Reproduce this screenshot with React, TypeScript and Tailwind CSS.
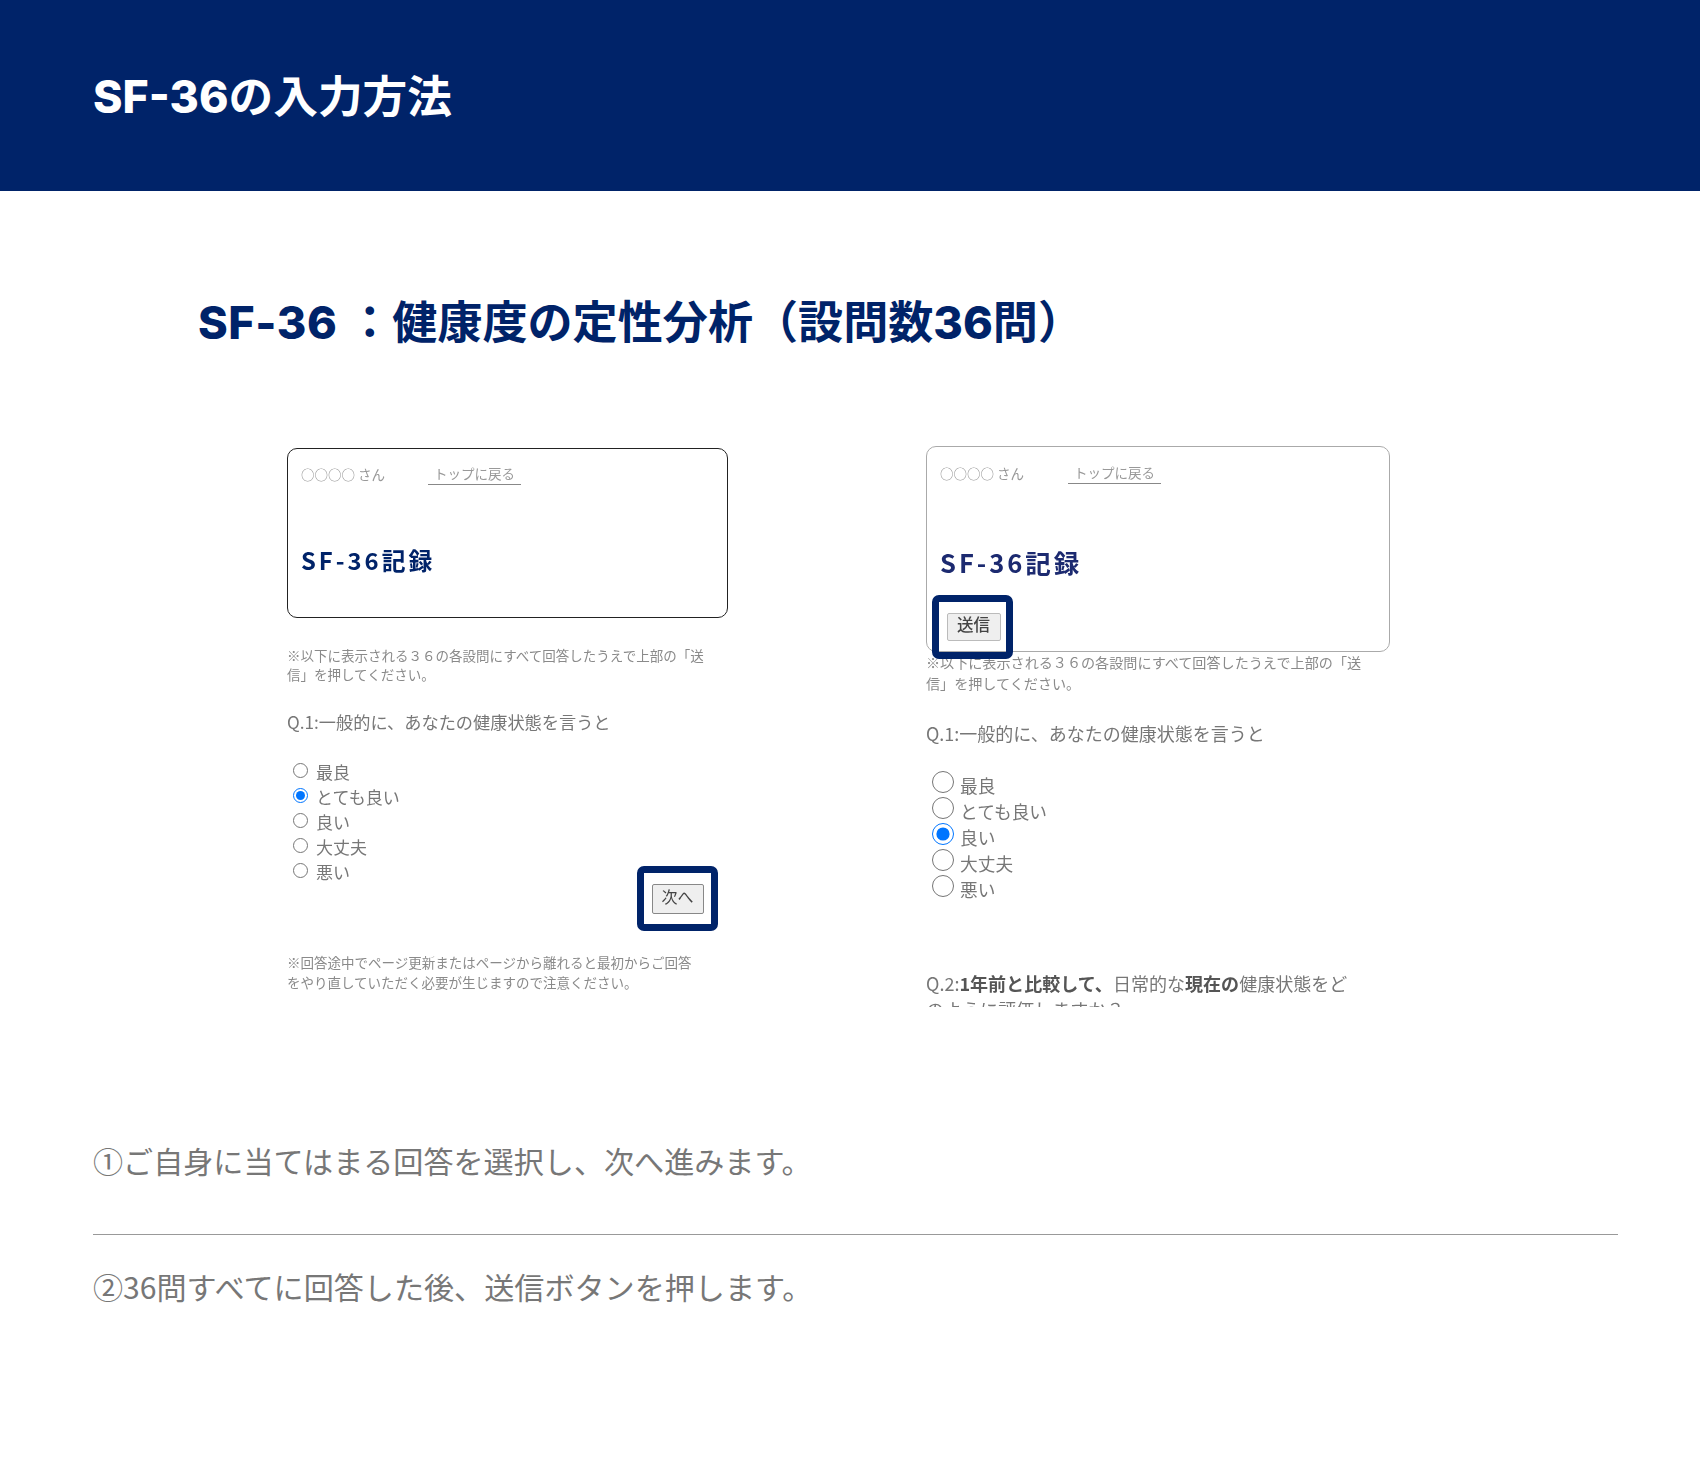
import React from "react";

const jp = "font-['Noto_Sans_CJK_JP','Noto_Sans',sans-serif]";
const latin = "font-['Inter','Noto_Sans_CJK_JP',sans-serif] font-extrabold";

function Radio({ label, checked, big }: { label: string; checked?: boolean; big?: boolean }) {
  return (
    <div className={big ? "flex h-[26px] items-center" : "flex h-[25px] items-center"}>
      <input
        type="radio"
        readOnly
        checked={!!checked}
        className={
          big
            ? "m-0 ml-[6px] h-[22px] w-[22px] shrink-0 accent-[#0075ff]"
            : "m-0 ml-[6px] h-[15px] w-[15px] shrink-0 accent-[#0075ff]"
        }
      />
      <span
        className={
          big
            ? "ml-[6px] mt-[6px] text-[17.7px] leading-[26px] text-[#777]"
            : "ml-[8px] mt-[2px] text-[17px] leading-[25px] text-[#777]"
        }
      >
        {label}
      </span>
    </div>
  );
}

const options = ["最良", "とても良い", "良い", "大丈夫", "悪い"];

function LeftShot() {
  return (
    <div className="relative h-[557px] w-[445px] overflow-hidden blur-[0.4px]">
      <div className="h-[170px] w-[441px] rounded-[10px] border-[1.5px] border-[#222] px-[13px] pt-[13px]">
        <div className="flex h-[24px] items-center text-[13.5px] text-[#999]">
          <span className="w-[127px]">○○○○ さん</span>
          <span className="w-[93px] border-b border-[#888] pb-[1px] text-center leading-[20px]">トップに戻る</span>
        </div>
        <div className="mt-[59px] text-[23.8px] font-bold leading-[30px] tracking-[3px] text-[#002369]">SF-36記録</div>
      </div>
      <p className="mt-[28px] whitespace-nowrap text-[13.5px] leading-[19px] text-[#8a8a8a]">
        ※以下に表示される３６の各設問にすべて回答したうえで上部の「送
        <br />
        信」を押してください。
      </p>
      <p className="mt-[26px] text-[17.2px] leading-[24px] text-[#777]">Q.1:一般的に、あなたの健康状態を言うと</p>
      <div className="mt-[24px]">
        {options.map((o, i) => (
          <Radio key={o} label={o} checked={i === 1} />
        ))}
      </div>
      <p className="mt-[70px] whitespace-nowrap text-[13.5px] leading-[19.5px] text-[#8a8a8a]">
        ※回答途中でページ更新またはページから離れると最初からご回答
        <br />
        をやり直していただく必要が生じますので注意ください。
      </p>
      <div className="absolute left-[350px] top-[418px] flex h-[65px] w-[81px] items-center justify-center rounded-[7px] border-[7px] border-[#002369]">
        <span className="flex h-[30px] w-[52px] items-center justify-center rounded-[2px] border border-[#888] bg-[#efefef] pb-[5px] text-[16px] text-[#444]">
          次へ
        </span>
      </div>
    </div>
  );
}

function RightShot() {
  return (
    <div className="relative h-[561px] w-[470px] overflow-hidden blur-[0.7px]">
      <div className="h-[206px] w-[464px] rounded-[10px] border-[1.5px] border-[#aaa] px-[13px] pt-[14px]">
        <div className="flex h-[24px] items-center text-[13.5px] text-[#999]">
          <span className="w-[128px]">○○○○ さん</span>
          <span className="w-[93px] border-b border-[#888] pb-[1px] text-center leading-[20px]">トップに戻る</span>
        </div>
        <div className="mt-[61px] text-[25.5px] font-bold leading-[32px] tracking-[3px] text-[#1c2a70]">SF-36記録</div>
      </div>
      <p className="mt-0 whitespace-nowrap text-[14.1px] leading-[20.5px] text-[#8a8a8a]">
        ※以下に表示される３６の各設問にすべて回答したうえで上部の「送
        <br />
        信」を押してください。
      </p>
      <p className="mt-[27px] text-[18px] leading-[26px] text-[#777]">Q.1:一般的に、あなたの健康状態を言うと</p>
      <div className="mt-[23px]">
        {options.map((o, i) => (
          <Radio key={o} label={o} checked={i === 2} big />
        ))}
      </div>
      <p className="mt-[71px] whitespace-nowrap text-[18.05px] leading-[26px] text-[#777]">
        Q.2:<b className="text-[#555]">1年前と比較して、</b>日常的な<b className="text-[#555]">現在の</b>健康状態をど
        <br />
        のように評価しますか？
      </p>
      <div className="absolute left-[6px] top-[149px] flex h-[64px] w-[81px] items-center justify-center rounded-[7px] border-[7px] border-[#002369]">
        <span className="ml-[2px] flex h-[28px] w-[54px] items-center justify-center rounded-[2px] border border-[#bbb] bg-[#efefef] pb-[6px] text-[16.5px] font-medium text-[#444]">
          送信
        </span>
      </div>
    </div>
  );
}

export default function App() {
  return (
    <div className={`min-h-[1478px] w-[1700px] bg-white ${jp}`}>
      <header className="flex h-[191px] items-center bg-[#002369] pl-[93px]">
        <h1 className="text-[44.7px] font-bold leading-none text-white">
          <span className={latin}>SF-36</span>の入力方法
        </h1>
      </header>
      <h2 className="ml-[198px] mt-[96px] text-[45.1px] font-bold leading-[66px] text-[#002369]">
        <span className={`${latin} tracking-[0.5px]`}>SF-36</span>
        <span className={latin}> </span>：健康度の定性分析（設問数<span className={latin}>36</span>問）
      </h2>
      <div className="ml-[287px] mt-[90px] flex items-start">
        <div className="pt-[2px]">
          <LeftShot />
        </div>
        <div className="ml-[194px]">
          <RightShot />
        </div>
      </div>
      <section className="ml-[93px] mt-[131px] w-[1525px] text-[30.1px] leading-[44px] text-[#777]">
        <p className="pb-[52px]">①ご自身に当てはまる回答を選択し、次へ進みます。</p>
        <p className="border-t border-[#999] pt-[29px]">②36問すべてに回答した後、送信ボタンを押します。</p>
      </section>
    </div>
  );
}
